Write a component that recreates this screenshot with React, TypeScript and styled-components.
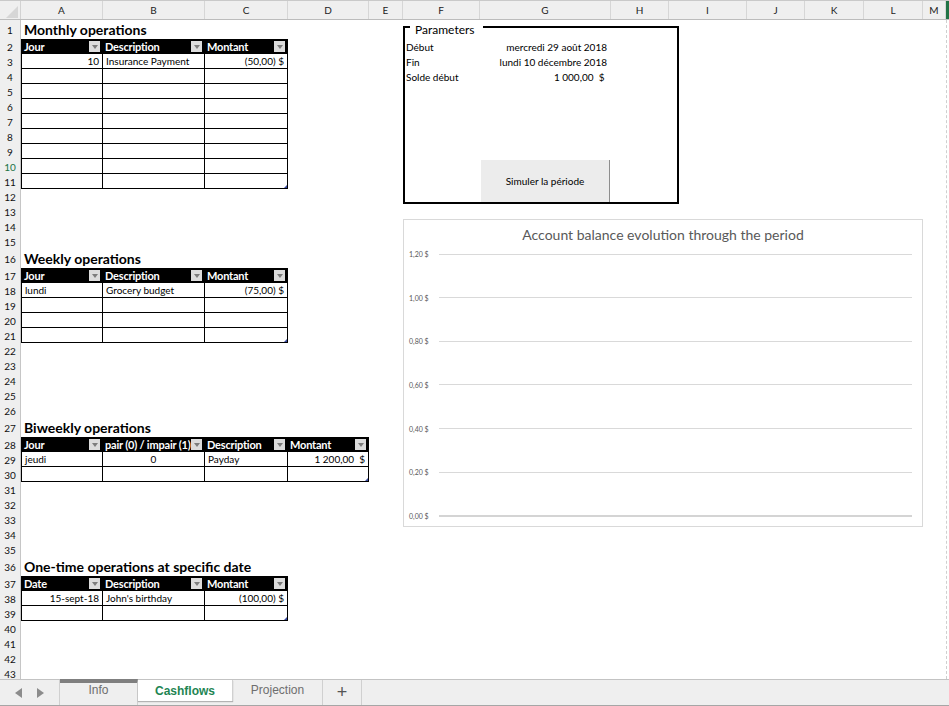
import React from 'react';
import styled, { createGlobalStyle } from 'styled-components';

const GlobalStyle = createGlobalStyle`
  html, body { margin: 0; padding: 0; background: #fff; }
  body { font-family: Lato, "Liberation Sans", sans-serif; }
  #root { width: 949px; height: 706px; overflow: hidden; }
`;

const COLS = [82, 102, 83, 81, 34, 77, 131, 58, 78, 58, 59, 59, 23];
const LETTERS = 'ABCDEFGHIJKLM'.split('');
const TALL = [1, 16, 27, 36];
const ROWS = Array.from({ length: 43 }, (_, i) => (TALL.includes(i + 1) ? 19 : 15));

type Align = 'left' | 'right' | 'center';
type CellData = { t?: string; a?: Align };

const Root = styled.div`
  width: 949px;
  height: 706px;
  display: flex;
  flex-direction: column;
  background: #fff;
  overflow: hidden;
  font-family: Lato, "Liberation Sans", sans-serif;
  color: #000;
`;

const Sheet = styled.div`
  height: 679px;
  flex: none;
  overflow: hidden;
  display: flex;
  flex-direction: column;
`;

const HeaderBar = styled.div`
  height: 20px;
  flex: none;
  display: flex;
  box-sizing: border-box;
  border-top: 1px solid #c9c9c9;
  border-bottom: 1px solid #bcbcbc;
  background: #efefef;
`;

const Corner = styled.div`
  width: 21px;
  flex: none;
  box-sizing: border-box;
  border-right: 1px solid #d2d2d2;
  position: relative;
  &::after {
    content: '';
    position: absolute;
    right: 2px;
    bottom: 1px;
    border-left: 12px solid transparent;
    border-bottom: 12px solid #d6d6d6;
  }
`;

const ColHead = styled.div<{ $w: number }>`
  width: ${p => p.$w}px;
  flex: none;
  box-sizing: border-box;
  border-right: 1px solid #d6d6d6;
  display: flex;
  align-items: center;
  justify-content: center;
  font-size: 10px;
  color: #222;
`;

const HeaderEdge = styled.div`
  flex: 1;
  background: #217346;
`;

const Body = styled.div`
  flex: 1;
  display: flex;
  min-height: 0;
`;

const RowHeads = styled.div`
  width: 21px;
  flex: none;
  box-sizing: border-box;
  background: #efefef;
  border-right: 1px solid #c6c6c6;
  display: flex;
  flex-direction: column;
`;

const RowHead = styled.div<{ $h: number; $sel?: boolean }>`
  height: ${p => p.$h}px;
  flex: none;
  display: flex;
  align-items: center;
  justify-content: center;
  font-size: 10px;
  color: ${p => (p.$sel ? '#217346' : '#111')};
`;

const Canvas = styled.div`
  display: grid;
  grid-template-columns: ${COLS.map(c => c + 'px').join(' ')};
  grid-template-rows: ${ROWS.map(r => r + 'px').join(' ')};
  flex: none;
`;

const RightStrip = styled.div`
  flex: 1;
  border-left: 1px dashed #cfcfcf;
`;

const SectionTitle = styled.div<{ $row: number }>`
  grid-column: 1 / 6;
  grid-row: ${p => p.$row};
  align-self: end;
  padding-left: 3px;
  font-weight: 700;
  font-size: 14px;
  line-height: 18px;
  white-space: nowrap;
`;

const TableGrid = styled.div<{ $cols: number[]; $col: string; $row: string }>`
  grid-column: ${p => p.$col};
  grid-row: ${p => p.$row};
  align-self: start;
  justify-self: start;
  position: relative;
  display: grid;
  grid-template-columns: ${p => p.$cols.map(c => c + 'px').join(' ')};
  grid-auto-rows: 15px;
  border-left: 1px solid #000;
`;

const HeadCell = styled.div`
  position: relative;
  background: #000;
  color: #fff;
  font-weight: 700;
  font-size: 11px;
  display: flex;
  align-items: center;
  padding-left: 2px;
  box-sizing: border-box;
  min-width: 0;
`;

const HeadText = styled.span`
  white-space: nowrap;
  letter-spacing: -0.2px;
`;

const FilterButton = styled.span`
  position: absolute;
  right: 3px;
  top: 2px;
  width: 11px;
  height: 11px;
  background: #dcdcdc;
  display: flex;
  align-items: center;
  justify-content: center;
  &::before {
    content: '';
    border-left: 3.5px solid transparent;
    border-right: 3.5px solid transparent;
    border-top: 4px solid #7c7c7c;
  }
`;

const DataCell = styled.div<{ $a: Align }>`
  box-sizing: border-box;
  border-right: 1px solid #000;
  border-bottom: 1px solid #000;
  font-size: 10px;
  line-height: 14px;
  padding: 0 3px 0 3px;
  text-align: ${p => p.$a};
  white-space: pre;
  overflow: hidden;
`;

const ResizeHandle = styled.span`
  position: absolute;
  right: 1px;
  bottom: 1px;
  border-left: 3px solid transparent;
  border-bottom: 3px solid #3a4aa0;
`;

const ParamBox = styled.div`
  grid-column: 6 / 10;
  grid-row: 1 / 13;
  justify-self: start;
  width: 276px;
  margin-top: 6px;
  box-sizing: border-box;
  border: 2px solid #000;
  display: flex;
  flex-direction: column;
`;

const Legend = styled.div`
  align-self: flex-start;
  margin: -5px 0 0 5px;
  padding: 0 8px 0 5px;
  background: #fff;
  font-size: 12px;
  line-height: 14px;
`;

const ParamGrid = styled.div`
  display: grid;
  grid-template-columns: 75px 131px;
  grid-auto-rows: 15px;
  margin-top: 3px;
  font-size: 10px;
  line-height: 15px;
`;

const ParamLabel = styled.div`
  padding-left: 1px;
  white-space: nowrap;
`;

const ParamValue = styled.div`
  text-align: right;
  padding-right: 4px;
  white-space: pre;
`;

const SimButton = styled.div`
  margin-top: auto;
  margin-left: 76px;
  width: 129px;
  height: 42px;
  box-sizing: border-box;
  background: #ececec;
  border-right: 1px solid #8e8e8e;
  display: flex;
  align-items: center;
  justify-content: center;
  font-size: 10px;
`;

const ChartFrame = styled.div`
  grid-column: 6 / 13;
  grid-row: 14 / 34;
  box-sizing: border-box;
  border: 1px solid #d9d9d9;
  display: flex;
  flex-direction: column;
`;

const ChartTitle = styled.div`
  text-align: center;
  font-size: 14px;
  line-height: 18px;
  color: #595959;
  padding-top: 6px;
  height: 18px;
`;

const Plot = styled.div`
  margin-top: 5px;
  height: 272px;
  display: flex;
  flex-direction: column;
  justify-content: space-between;
`;

const GridRow = styled.div`
  height: 10px;
  display: flex;
  align-items: center;
`;

const AxisLabel = styled.span`
  width: 35px;
  flex: none;
  box-sizing: border-box;
  padding-left: 5px;
  font-size: 7px;
  color: #595959;
  white-space: pre;
`;

const GridLine = styled.span<{ $base?: boolean }>`
  flex: 1;
  margin-right: 10px;
  height: ${p => (p.$base ? 2 : 1)}px;
  background: ${p => (p.$base ? '#d4d4d4' : '#d9d9d9')};
`;

const TabBar = styled.div`
  height: 27px;
  flex: none;
  box-sizing: border-box;
  display: flex;
  background: #efefef;
  border-top: 1px solid #c3c3c3;
  border-bottom: 1px solid #a6a6a6;
  font-family: "Liberation Sans", Arial, sans-serif;
`;

const NavArrows = styled.div`
  width: 60px;
  flex: none;
  box-sizing: border-box;
  border-right: 1px solid #d0d0d0;
  display: flex;
  align-items: center;
  justify-content: center;
  gap: 15px;
`;

const Arrow = styled.span<{ $dir: 'left' | 'right' }>`
  border-top: 5px solid transparent;
  border-bottom: 5px solid transparent;
  ${p => (p.$dir === 'left' ? 'border-right: 7px solid #8c8c8c;' : 'border-left: 7px solid #8c8c8c;')}
`;

const Tab = styled.div<{ $w: number; $active?: boolean; $bar?: boolean }>`
  width: ${p => p.$w}px;
  flex: none;
  box-sizing: border-box;
  height: ${p => (p.$active ? '21px' : 'auto')};
  margin-top: ${p => (p.$bar ? '-1px' : '0')};
  border-top: ${p => (p.$bar ? '4px solid #7f7f7f' : 'none')};
  border-right: 1px solid #d0d0d0;
  background: ${p => (p.$active ? '#fff' : 'transparent')};
  box-shadow: ${p => (p.$active ? '0 1px 1px rgba(0,0,0,0.25)' : 'none')};
  display: flex;
  align-items: ${p => (p.$active ? 'center' : 'flex-start')};
  justify-content: center;
  padding-top: ${p => (p.$active ? '0' : p.$bar ? '0' : '3px')};
  font-size: 12px;
  font-weight: ${p => (p.$active ? 700 : 400)};
  color: ${p => (p.$active ? '#1e8553' : '#6e6e6e')};
`;

const AddTab = styled.div`
  width: 39px;
  flex: none;
  box-sizing: border-box;
  border-right: 1px solid #d0d0d0;
  display: flex;
  justify-content: center;
  padding-top: 1px;
  font-size: 18px;
  line-height: 22px;
  color: #555;
`;

type TableProps = {
  cols: number[];
  headers: string[];
  rows: CellData[][];
  col: string;
  row: string;
};

function DataTable({ cols, headers, rows, col, row }: TableProps) {
  return (
    <TableGrid $cols={cols} $col={col} $row={row}>
      {headers.map((h, i) => (
        <HeadCell key={'h' + i}>
          <HeadText>{h}</HeadText>
          <FilterButton />
        </HeadCell>
      ))}
      {rows.map((r, ri) =>
        r.map((c, ci) => (
          <DataCell key={ri + '-' + ci} $a={c.a || 'left'}>
            {c.t || ''}
          </DataCell>
        ))
      )}
      <ResizeHandle />
    </TableGrid>
  );
}

const empty = (n: number, k: number): CellData[][] =>
  Array.from({ length: n }, () => Array.from({ length: k }, () => ({})));

const AXIS = ['1,20 $', '1,00 $', '0,80 $', '0,60 $', '0,40 $', '0,20 $', '0,00 $'];

export default function App() {
  return (
    <Root>
      <GlobalStyle />
      <Sheet>
        <HeaderBar>
          <Corner />
          {LETTERS.map((l, i) => (
            <ColHead key={l} $w={COLS[i]}>{l}</ColHead>
          ))}
          <HeaderEdge />
        </HeaderBar>
        <Body>
          <RowHeads>
            {ROWS.map((h, i) => (
              <RowHead key={i} $h={h} $sel={i + 1 === 10}>{i + 1}</RowHead>
            ))}
          </RowHeads>
          <Canvas>
            <SectionTitle $row={1}>Monthly operations</SectionTitle>
            <DataTable
              col="1 / 4"
              row="2 / 12"
              cols={[81, 102, 83]}
              headers={['Jour', 'Description', 'Montant']}
              rows={[
                [{ t: '10', a: 'right' }, { t: 'Insurance Payment' }, { t: '(50,00) $', a: 'right' }],
                ...empty(8, 3),
              ]}
            />
            <SectionTitle $row={16}>Weekly operations</SectionTitle>
            <DataTable
              col="1 / 4"
              row="17 / 22"
              cols={[81, 102, 83]}
              headers={['Jour', 'Description', 'Montant']}
              rows={[
                [{ t: 'lundi' }, { t: 'Grocery budget' }, { t: '(75,00) $', a: 'right' }],
                ...empty(3, 3),
              ]}
            />
            <SectionTitle $row={27}>Biweekly operations</SectionTitle>
            <DataTable
              col="1 / 5"
              row="28 / 31"
              cols={[81, 102, 83, 81]}
              headers={['Jour', 'pair (0) / impair (1)', 'Description', 'Montant']}
              rows={[
                [{ t: 'jeudi' }, { t: '0', a: 'center' }, { t: 'Payday' }, { t: '1 200,00  $', a: 'right' }],
                ...empty(1, 4),
              ]}
            />
            <SectionTitle $row={36}>One-time operations at specific date</SectionTitle>
            <DataTable
              col="1 / 4"
              row="37 / 40"
              cols={[81, 102, 83]}
              headers={['Date', 'Description', 'Montant']}
              rows={[
                [{ t: '15-sept-18', a: 'right' }, { t: "John's birthday" }, { t: '(100,00) $', a: 'right' }],
                ...empty(1, 3),
              ]}
            />
            <ParamBox>
              <Legend>Parameters</Legend>
              <ParamGrid>
                <ParamLabel>Début</ParamLabel>
                <ParamValue>mercredi 29 août 2018</ParamValue>
                <ParamLabel>Fin</ParamLabel>
                <ParamValue>lundi 10 décembre 2018</ParamValue>
                <ParamLabel>Solde début</ParamLabel>
                <ParamValue>{'1 000,00  $ '}</ParamValue>
              </ParamGrid>
              <SimButton>Simuler la période</SimButton>
            </ParamBox>
            <ChartFrame>
              <ChartTitle>Account balance evolution through the period</ChartTitle>
              <Plot>
                {AXIS.map((a, i) => (
                  <GridRow key={a}>
                    <AxisLabel>{a}</AxisLabel>
                    <GridLine $base={i === AXIS.length - 1} />
                  </GridRow>
                ))}
              </Plot>
            </ChartFrame>
          </Canvas>
          <RightStrip />
        </Body>
      </Sheet>
      <TabBar>
        <NavArrows>
          <Arrow $dir="left" />
          <Arrow $dir="right" />
        </NavArrows>
        <Tab $w={78} $bar>Info</Tab>
        <Tab $w={95} $active>Cashflows</Tab>
        <Tab $w={90}>Projection</Tab>
        <AddTab>+</AddTab>
      </TabBar>
    </Root>
  );
}
